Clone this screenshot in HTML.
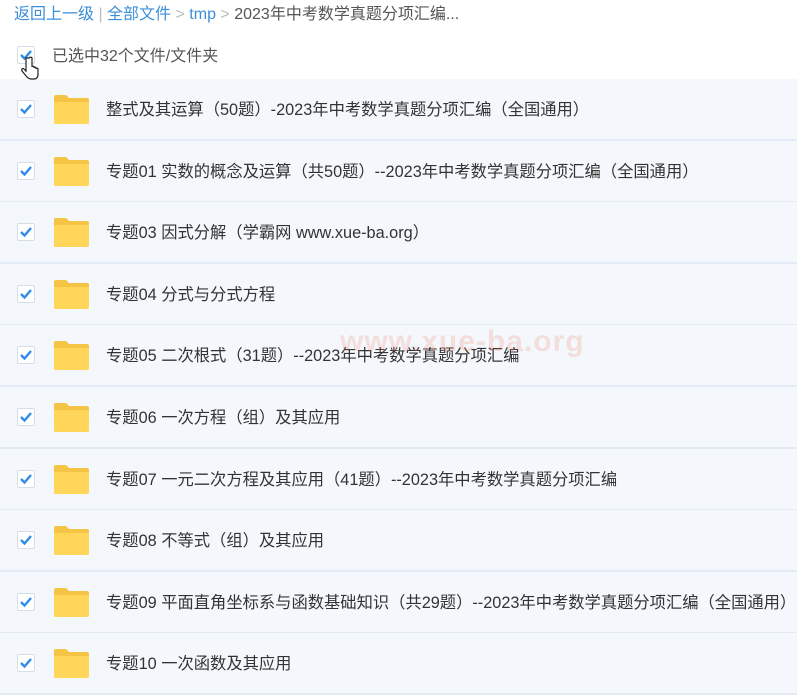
<!DOCTYPE html>
<html><head><meta charset="utf-8"><style>
body{margin:0;width:797px;height:691px;overflow:hidden;background:#fff;font-family:"Liberation Sans","Noto Sans CJK SC",sans-serif;position:relative}
.bc{position:absolute;left:14px;top:0px;font-size:16px;color:#3b8fd9;white-space:nowrap}
.bc .g{color:#bbb}.bc .d{color:#555}
.sel{position:absolute;left:52px;top:42px;font-size:16px;color:#555}
.cb{position:absolute;width:16px;height:16px;border:1px solid #d5dde6;border-radius:2px;background:#fff}
.cb svg{position:absolute;left:1px;top:1px}
.row{position:absolute;left:0;width:797px;height:60px;background:#f4f8fd;border-bottom:2px solid #e3ecf6}
.row .cb{left:17px;top:21px}
.fold{position:absolute;left:53px;top:15px;width:37px;height:30px}
.row .t{position:absolute;left:106px;top:17px;font-size:16.3px;color:#333;white-space:nowrap}
.wm{position:absolute;left:340px;top:325px;font-size:30px;font-weight:bold;color:rgba(240,120,90,0.2);letter-spacing:1px}
</style></head><body>
<div class="bc">返回上一级 <span class="g">|</span> 全部文件 <span class="g">&gt;</span> tmp <span class="g">&gt;</span> <span class="d">2023年中考数学真题分项汇编...</span></div>
<div class="cb" style="left:17px;top:46px"><svg width="14" height="14"><path d="M2 7l3.5 3.5L12 3" stroke="#2f8ce8" stroke-width="2.4" fill="none"/></svg></div>
<div class="sel">已选中32个文件/文件夹</div>
<svg style="position:absolute;left:20px;top:56px;z-index:5" width="20" height="26"><path d="M6 2v13l-2-2c-1-1-3 0-2 2l5 6c1 1 2 2 4 2h3c3 0 4-2 4-5v-5c0-1-2-1-2 0v-1c0-1-2-1-2 0v-1c0-1-2-1-2 0V2c0-1-3-1-3 0z" fill="#fff" stroke="#222" stroke-width="1.2"/></svg>
<div id="rows"></div>
<div class="wm">www.xue-ba.org</div>
<script>
var t=["整式及其运算（50题）-2023年中考数学真题分项汇编（全国通用）","专题01 实数的概念及运算（共50题）--2023年中考数学真题分项汇编（全国通用）","专题03 因式分解（学霸网 www.xue-ba.org）","专题04 分式与分式方程","专题05 二次根式（31题）--2023年中考数学真题分项汇编","专题06 一次方程（组）及其应用","专题07 一元二次方程及其应用（41题）--2023年中考数学真题分项汇编","专题08 不等式（组）及其应用","专题09 平面直角坐标系与函数基础知识（共29题）--2023年中考数学真题分项汇编（全国通用）","专题10 一次函数及其应用"];
var h="";for(var i=0;i<t.length;i++){var y=Math.round(79+i*61.6);
h+='<div class="row" style="top:'+y+'px"><div class="cb"><svg width="14" height="14"><path d="M2 7l3.5 3.5L12 3" stroke="#2f8ce8" stroke-width="2.4" fill="none"/></svg></div><svg class="fold" viewBox="0 0 37 30"><path d="M1 3a2 2 0 0 1 2-2h10l3 3h18a2 2 0 0 1 2 2v22a2 2 0 0 1-2 2H3a2 2 0 0 1-2-2z" fill="#f6c445"/><path d="M1 8h35v20a2 2 0 0 1-2 2H3a2 2 0 0 1-2-2z" fill="#ffd659"/></svg><div class="t">'+t[i]+'</div></div>';}
document.getElementById("rows").innerHTML=h;
</script>
</body></html>
